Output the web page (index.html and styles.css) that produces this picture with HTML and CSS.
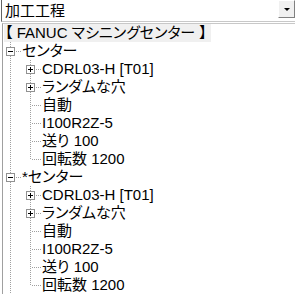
FILE: index.html
```html
<!DOCTYPE html>
<html lang="ja">
<head>
  <meta charset="UTF-8" />
  <title>加工工程</title>
  <link rel="stylesheet" href="styles.css">
</head>
<body>

  <div class="combo">
    <span class="combo-text">加工工程</span>
    <span class="combo-btn"><span class="arrow"></span></span>
  </div>

  <div class="tree">
    <div class="row root"><span class="label sel">【 FANUC マシニングセンター 】</span></div>

    <div class="row"><span class="cell tee"><span class="box minus"></span></span><span class="label">センター</span></div>
    <div class="row"><span class="cell pipe"></span><span class="cell tee"><span class="box plus"></span></span><span class="label">CDRL03-H [T01]</span></div>
    <div class="row"><span class="cell pipe"></span><span class="cell tee"><span class="box plus"></span></span><span class="label">ランダムな穴</span></div>
    <div class="row"><span class="cell pipe"></span><span class="cell tee"></span><span class="label">自動</span></div>
    <div class="row"><span class="cell pipe"></span><span class="cell tee"></span><span class="label">I100R2Z-5</span></div>
    <div class="row"><span class="cell pipe"></span><span class="cell tee"></span><span class="label">送り 100</span></div>
    <div class="row"><span class="cell pipe"></span><span class="cell elbow"></span><span class="label">回転数 1200</span></div>

    <div class="row"><span class="cell tee"><span class="box minus"></span></span><span class="label">*センター</span></div>
    <div class="row"><span class="cell pipe"></span><span class="cell tee"><span class="box plus"></span></span><span class="label">CDRL03-H [T01]</span></div>
    <div class="row"><span class="cell pipe"></span><span class="cell tee"><span class="box plus"></span></span><span class="label">ランダムな穴</span></div>
    <div class="row"><span class="cell pipe"></span><span class="cell tee"></span><span class="label">自動</span></div>
    <div class="row"><span class="cell pipe"></span><span class="cell tee"></span><span class="label">I100R2Z-5</span></div>
    <div class="row"><span class="cell pipe"></span><span class="cell tee"></span><span class="label">送り 100</span></div>
    <div class="row"><span class="cell pipe"></span><span class="cell elbow"></span><span class="label">回転数 1200</span></div>
  </div>

</body>
</html>
```

FILE: styles.css
```css
body {
  margin: 0;
  background: #fff;
  color: #000;
  font-family: "Liberation Sans", "Noto Sans CJK JP", sans-serif;
  font-size: 15px;
  font-feature-settings: "palt";
  overflow: hidden;
}
.combo {
  height: 21px;
  border-left: 1px solid #646464;
  margin-left: 1px;
  border-bottom: 1px solid #c8c8c8;
  display: flex;
  align-items: center;
  justify-content: space-between;
}
.combo-text {
  padding-left: 3px;
  line-height: 18px;
}
.combo-btn {
  width: 15px;
  height: 16px;
  margin: 0 0 3px;
  background: #f0f0f0;
  border-top: 1px solid #fff;
  border-left: 1px solid #fff;
  border-right: 1px solid #808080;
  border-bottom: 1px solid #808080;
  display: flex;
  align-items: center;
  justify-content: center;
}
.arrow {
  width: 0;
  height: 0;
  border-left: 3px solid transparent;
  border-right: 3px solid transparent;
  border-top: 3px solid #000;
}
.tree {
  margin-top: 1px;
  margin-left: 2px;
  border-top: 1px solid #c8c8c8;
  border-left: 1px solid #a0a0a0;
}
.row {
  height: 18px;
  display: flex;
  align-items: center;
}
.label {
  white-space: nowrap;
  line-height: 18px;
  margin-left: -1px;
}
.root .label {
  margin-left: 1px;
  padding: 0 4px 0 1px;
}
.sel {
  background: #f0f0f0;
}
.cell {
  position: relative;
  width: 20px;
  height: 18px;
  flex: none;
}
.cell::before,
.cell::after {
  content: "";
  position: absolute;
}
.pipe::before,
.tee::before,
.elbow::before {
  left: 7px;
  top: 0;
  width: 1px;
  height: 18px;
  background: repeating-linear-gradient(to bottom, #a0a0a0 0 1px, transparent 1px 2px);
}
.elbow::before {
  height: 9px;
}
.tee::after,
.elbow::after {
  left: 8px;
  top: 9px;
  width: 10px;
  height: 1px;
  background: repeating-linear-gradient(to right, transparent 0 1px, #a0a0a0 1px 2px);
}
.box {
  position: absolute;
  left: 3px;
  top: 5px;
  width: 7px;
  height: 7px;
  border: 1px solid #919191;
  background: #fff;
  z-index: 1;
}
.box::before,
.box::after {
  content: "";
  position: absolute;
  background: #000;
}
.box::before {
  left: 1px;
  top: 3px;
  width: 5px;
  height: 1px;
}
.plus::after {
  left: 3px;
  top: 1px;
  width: 1px;
  height: 5px;
}
```
